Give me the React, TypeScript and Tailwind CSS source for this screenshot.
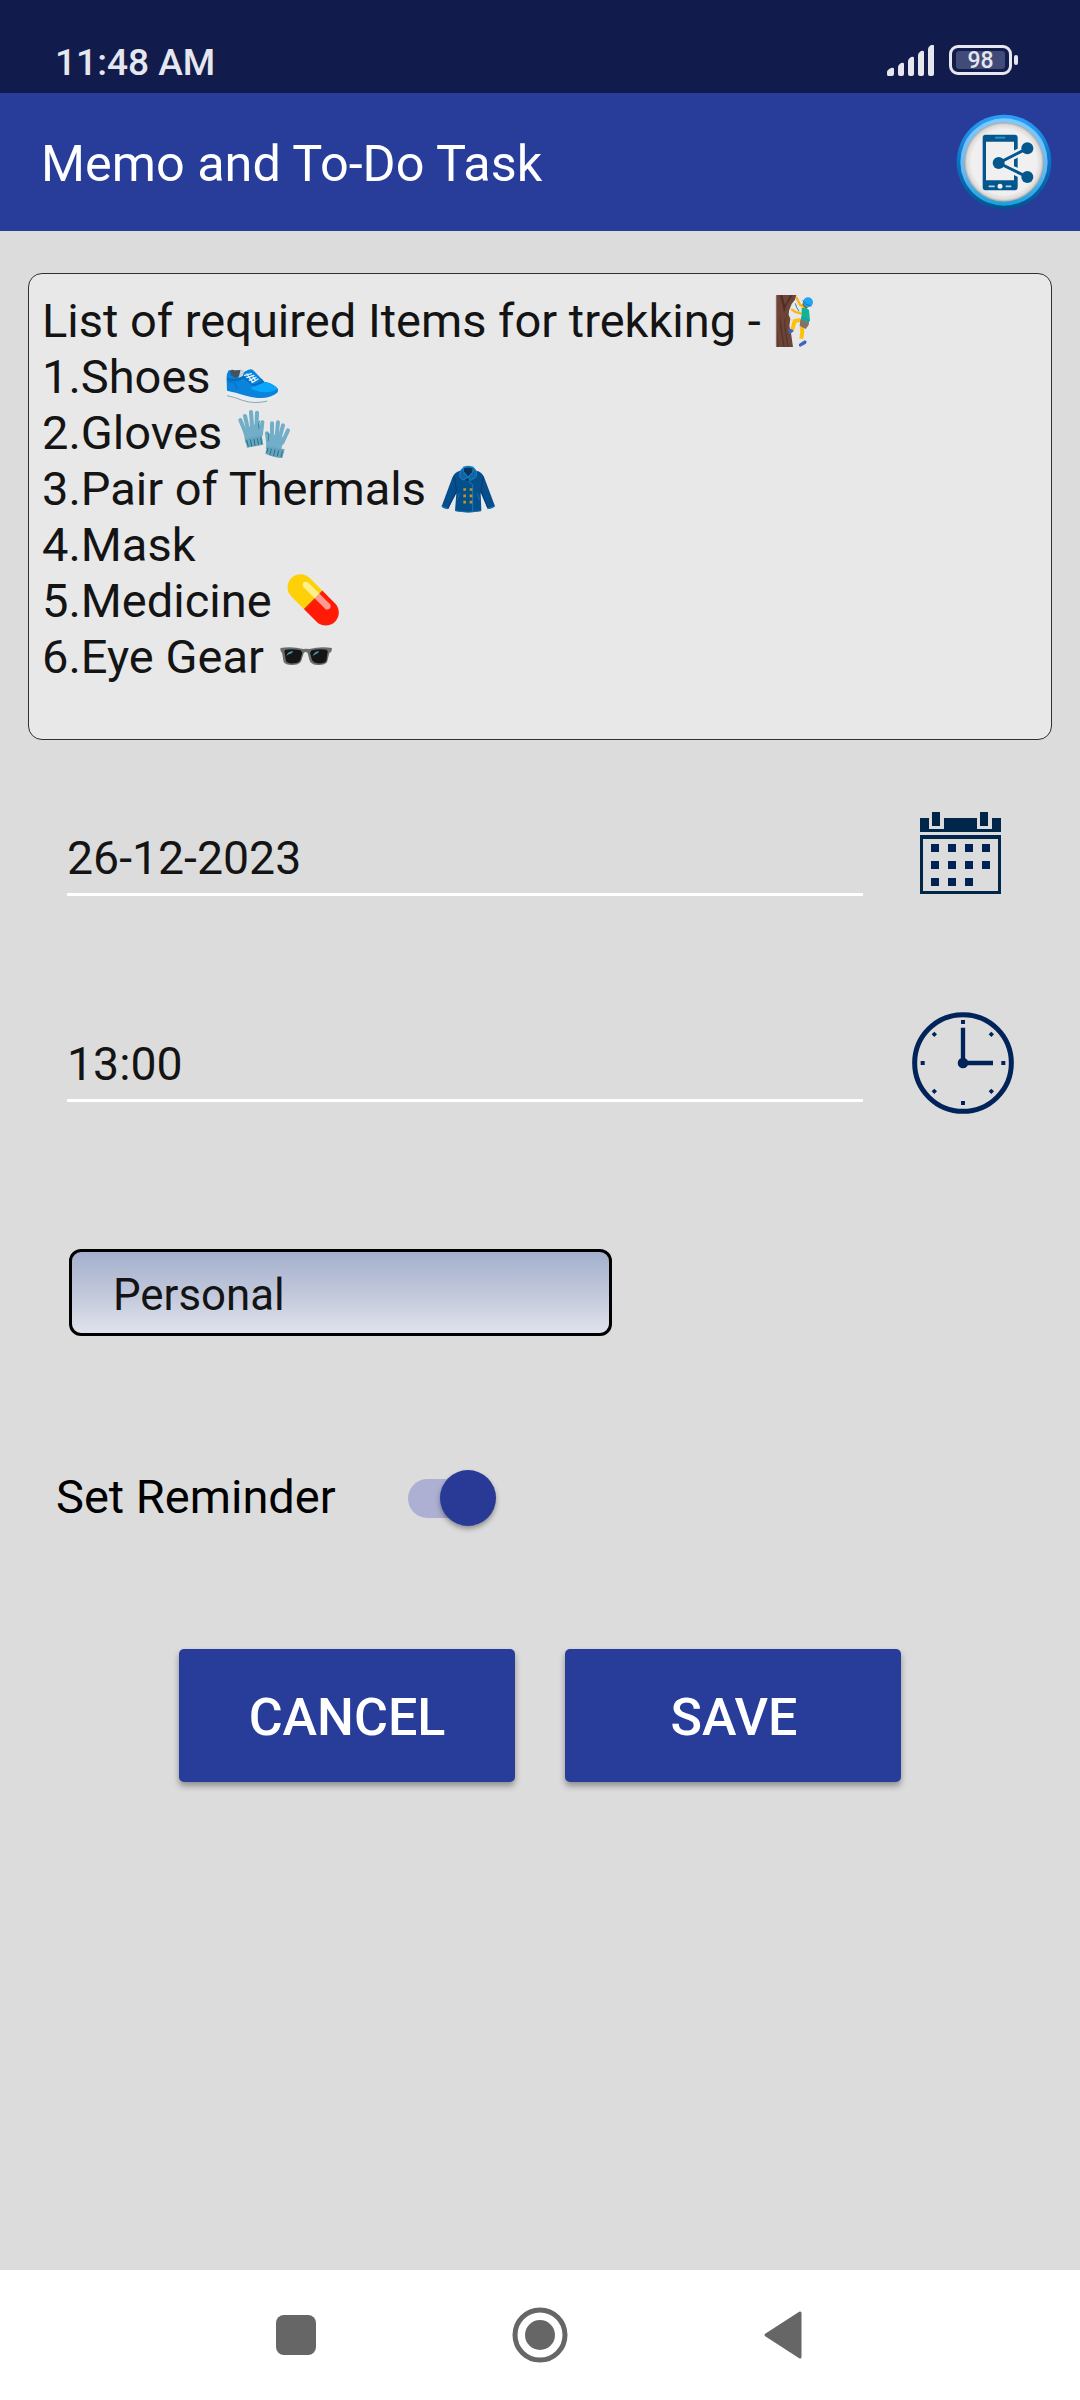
import React, { useState } from "react";
import clsx from "clsx";

const emojiClass = "ml-px h-14 w-[58px] shrink-0";

const ClimberEmoji = () => (
  <svg viewBox="99 69 174 168" className={emojiClass}>
    <path d="M109 75h60l-4 14-10 13-8 20-1 12 5 12-3 22 4 14 7 49h-50z" fill="#6d4437" />
    <path d="M119 76l10 36 3 18 8-26 18-28h-8l-15 30-8-30z" fill="#4e3029" />
    <path d="M120 130l5 40 9 60h-4l-10-60zM143 125l-8 28 3 30 8 47h-4l-8-50-2-26zM111 170l5 60h-4z" fill="#56352c" />
    <path d="M109 76v154" stroke="#8d6558" strokeWidth="2" />
    <path d="M170 84l10 20 10 6M156 119l10 7 18 5" stroke="#fbb416" strokeWidth="7" strokeLinejoin="round" strokeLinecap="round" fill="none" />
    <path d="M166 100q3 14 11 24" stroke="#2f82a5" strokeWidth="3" fill="none" />
    <path d="M188 96l18-2 3 14-11 9-13-4z" fill="#ffc107" />
    <path d="M190 96l5 10 9 5-6 4-11-10z" fill="#795025" />
    <circle cx="204" cy="97" r="15" fill="#22a5f1" />
    <path d="M188 91l8 11 18 6" stroke="#1675c7" strokeWidth="3" fill="none" />
    <path d="M185 115q12-7 22 5l3 32-7 8-22-4 4-20z" fill="#13b295" />
    <path d="M184 142l24 10" stroke="#149cb5" strokeWidth="5" />
    <path d="M182 150l-18 3-7 26M185 170l2 15-3 21" stroke="#fcc20b" strokeWidth="12" strokeLinejoin="round" fill="none" />
    <path d="M181 148l26 8-1 9-9 12-18-9z" fill="#82736a" />
    <path d="M145 174q6 4 14 5l2 5-12 9-4-8z" fill="#3e64bb" />
    <path d="M177 222l17-11 6 3-2 7-17 9-4-2z" fill="#3e64bb" />
  </svg>
);

const ShoeEmoji = () => (
  <svg viewBox="66 -3 174 168" className={emojiClass}>
    <path d="M77 120l2 20q18 4 44 13 33 8 59 4 33-3 49-22l-1-10z" fill="#e7eef1" />
    <path d="M78 137q22 4 46 14 38 12 75 2" stroke="#8aa5b2" strokeWidth="3" fill="none" />
    <path d="M83 61q-8 12-6 30l1 31q24 5 57 15 60 18 93-8 6-7 1-14-17-18-39-20l-35-36q-9-4-20 4-25 15-45-2z" fill="#0983dc" />
    <path d="M149 116q18-20 39-20 30 5 42 20-33 21-81 0z" fill="#08a7fb" />
    <path d="M88 63q4-6 12-2l21-1-4 16-14 8-14-9z" fill="#43525e" />
    <path d="M119 58q8 0 10 8l-4 13-12 4z" fill="#cad1d6" />
    <path d="M79 87q31 8 48-6l33 25 25-10-5-8" stroke="#066cb9" strokeWidth="6" fill="none" />
    <path d="M80 93l21 6 8 18" stroke="#0a75c7" strokeWidth="5" fill="none" />
    <path d="M131 76l20-5M137 83l22-7M145 91l20-9M153 98l18-11M138 72l17 25M153 77l9 12" stroke="#dff3ff" strokeWidth="4" strokeLinecap="round" />
  </svg>
);

const GlovesEmoji = () => (
  <svg viewBox="99 164 174 168" className={emojiClass}>
    <g stroke="#72aec7" strokeWidth="12" strokeLinecap="round" fill="#72aec7">
      <path d="M115 209l16 40M129 197l10 44M147 185l4 55M165 187l-2 53M181 216l-4 35" />
      <path d="M130 241l38-16 8 28-10 13-31 6z" />
      <path d="M210 219l0 43M228 216l-4 40M243 225l-10 38M258 240l-17 37M195 249l4 34" />
      <path d="M203 256l36 10-7 30-34-6z" />
    </g>
    <path d="M129 266l50-11 5 28-49 9z" fill="#68a4bd" />
    <path d="M195 288l53 9-7 26q-27-1-51-13z" fill="#68a4bd" />
    <path d="M134 269l5 20M145 267l4 22M156 266l3 20M166 264l4 19M176 261l3 20M198 293l-4 15M208 295l-4 18M219 297l-4 20M230 300l-4 18M241 302l-4 18" stroke="#23718b" strokeWidth="3" />
    <path d="M173 211q-7 8-2 24M194 247l6 4-1 22" stroke="#3787a3" strokeWidth="3" fill="none" />
  </svg>
);

const CoatEmoji = () => (
  <svg viewBox="717 331.5 174 168" className={emojiClass}>
    <path d="M780 361q-17 5-23 20l-32 86q4 8 19 8l25-46-4 52q38 9 79 0l-2-54 21 48q12 2 22-8l-32-85q-7-18-24-21z" fill="#064f8d" />
    <path d="M763 378l6 43-25 54M850 378l-7 42 20 52" stroke="#043c70" strokeWidth="3" fill="none" />
    <path d="M725 467l18 8M863 475l21-8" stroke="#1678bd" strokeWidth="3" />
    <path d="M790 352l14-4 16 4 8 12-13 26-13 2-16-16z" fill="#07375f" />
    <path d="M790 351q-14 11-10 29l9 9 16-9-15-17zM820 351q13 10 8 28l-18 12-5-12 13-14z" fill="#1264a2" stroke="#1c85ca" strokeWidth="3" />
    <path d="M790 351q14-5 30 0" stroke="#1c85ca" strokeWidth="5" fill="none" />
    <path d="M803 391l15 12v80" stroke="#167bb8" strokeWidth="3" fill="none" />
    <path d="M779 428l-7 20M831 428l8 20M767 481q39 8 76 0" stroke="#1670ad" strokeWidth="3" fill="none" />
    <path d="M790 413h8v8h-8zM809 413h8v8h-8zM790 432h8v8h-8zM809 432h8v8h-8zM790 451h8v8h-8zM809 451h8v8h-8z" fill="#bc9a16" />
  </svg>
);

const PillEmoji = () => (
  <svg viewBox="99 36 174 168" className={emojiClass}>
    <g transform="rotate(45 186.5 119.5)">
      <path d="M187 80.500H133a39 39 0 0 0 0 78H187z" fill="#fdd007" />
      <path d="M187 80.500H240a39 39 0 0 1 0 78H187z" fill="#ff1b05" />
      <path d="M187 80.500v78" stroke="#c73916" strokeWidth="2" />
      <path d="M187 93H137q-16 10 0 20h50z" fill="#ffef8c" />
      <path d="M187 93H233q15 10 0 20h-46z" fill="#ff9b91" />
    </g>
  </svg>
);

const GlassesEmoji = () => (
  <svg viewBox="78 204 174 168" className={emojiClass}>
    <path d="M88 264q35-6 69 3 9-2 18 0 34-9 68-3l-2 11-6 4-7 28q-8 10-34 7-12-1-18-12l-6-22q-6-8-12 0l-7 22q-5 11-20 12-25 3-33-8l-5-28-4-4z" fill="#6c6c6c" />
    <path d="M103 269q22-4 46 2l5 7-6 22q-5 10-19 10-19 2-24-7l-5-29zM182 271q24-6 45-2l3 5-4 29q-7 9-26 7-12-1-17-10l-6-22z" fill="#131516" />
    <path d="M106 287q5-13 20-14-2 9-11 9zM185 288q5-14 19-15-2 9-10 10z" fill="#508fa8" />
  </svg>
);

const noteLines = [
  { text: "List of required Items for trekking - ", Emoji: ClimberEmoji },
  { text: "1.Shoes ", Emoji: ShoeEmoji },
  { text: "2.Gloves ", Emoji: GlovesEmoji },
  { text: "3.Pair of Thermals ", Emoji: CoatEmoji },
  { text: "4.Mask" },
  { text: "5.Medicine ", Emoji: PillEmoji },
  { text: "6.Eye Gear ", Emoji: GlassesEmoji },
];

const StatusBar = () => (
  <div className="flex h-[93px] justify-between bg-[#111c4c] pl-[55px] pr-[62px] text-[#e5e6ee]">
    <span className="pt-[41px] text-[37.100px] leading-[44px] font-medium">11:48 AM</span>
    <div className="flex items-start pt-[45px]">
      <svg viewBox="0 0 48 31" className="mr-[14px] h-[31px] w-[48px]" fill="currentColor">
        <path d="M0 27q0-2 4-4 3-1 3 1v5q0 2-2 2H1q-1 0-1-2zM11 22q0-2 3-4 3-1 3 1v10q0 2-2 2h-2q-2 0-2-2zM21 16q0-2 3-4 3-1 3 1v16q0 2-2 2h-2q-2 0-2-2zM31 10q0-2 3-4 3-1 3 1v22q0 2-2 2h-2q-2 0-2-2zM41 4q0-2 3-4 3-1 3 1v28q0 2-2 2h-2q-2 0-2-2z" />
      </svg>
      <div className="flex h-[30px] w-[63px] items-center justify-center rounded-[9px] border-[3px] border-[#e5e6ee]">
        <div className="flex h-[18px] w-[49px] items-center justify-center rounded-[3px] bg-[#414b78] pt-[2px] text-[23px] leading-[18px] font-medium">
          98
        </div>
      </div>
      <div className="mt-[10px] ml-[2px] h-[10px] w-[4px] rounded-[2px] bg-[#e5e6ee]" />
    </div>
  </div>
);

const ShareIcon = () => (
  <svg viewBox="349 283 288 288" className="h-24 w-24">
    <defs>
      <linearGradient id="ring" x1="0" y1="0" x2="0" y2="1">
        <stop offset="0" stopColor="#2ba0fa" />
        <stop offset="0.5" stopColor="#0874c4" />
        <stop offset="1" stopColor="#03548e" />
      </linearGradient>
      <linearGradient id="innerRing" x1="0" y1="0" x2="0" y2="1">
        <stop offset="0" stopColor="#7fcaff" />
        <stop offset="0.6" stopColor="#67b8f2" />
        <stop offset="1" stopColor="#18a0dc" />
      </linearGradient>
      <radialGradient id="face">
        <stop offset="0.82" stopColor="#f0f0f1" />
        <stop offset="0.94" stopColor="#dedbd8" />
        <stop offset="1" stopColor="#a6a6a6" />
      </radialGradient>
    </defs>
    <circle cx="493" cy="427" r="142" fill="url(#ring)" />
    <circle cx="493" cy="427" r="131" fill="url(#innerRing)" />
    <circle cx="493" cy="427" r="119" fill="url(#face)" />
    <path
      fillRule="evenodd"
      d="M438 345h87q9 0 9 9v149q0 9-9 9h-87q-9 0-9-9V354q0-9 9-9zm1 21v116h84V366z"
      fill="#05568d"
    />
    <path d="M466 354h31" stroke="#2293c9" strokeWidth="6" />
    <path d="M447 500h18M498 500h17" stroke="#a9d9ee" strokeWidth="5" />
    <circle cx="481" cy="500" r="7.500" fill="#eef4f8" />
    <path d="M563 386l-86 44 86 42" stroke="#f0f0f1" strokeWidth="24" fill="none" />
    <path d="M563 386l-86 44 86 42" stroke="#05568d" strokeWidth="9" fill="none" />
    <path d="M528 419v21" stroke="#05568d" strokeWidth="8" />
    <circle cx="477" cy="430" r="18" fill="#05568d" />
    <circle cx="563" cy="386" r="18" fill="#05568d" />
    <circle cx="563" cy="472" r="18" fill="#05568d" />
  </svg>
);

const CalendarIcon = () => (
  <svg viewBox="240 96 243 246" className="h-[82px] w-[81px]" fill="#002356">
    <path d="M276 96h24v42h-24zM420 96h24v42h-24z" fill="#00234a" />
    <path d="M240 114h27v33h45v-33h99v33h45v-33h27v42H240z" fill="#002649" />
    <path fillRule="evenodd" d="M240 165h243v177H240zm9 12v156h225V177z" fill="#002649" />
    <path d="M273 192h24v24h-24zM324 192h24v24h-24zM375 192h24v24h-24zM426 192h24v24h-24zM273 243h24v24h-24zM324 243h24v24h-24zM375 243h24v24h-24zM426 243h24v24h-24zM273 294h24v24h-24zM324 294h24v24h-24zM375 294h24v24h-24z" />
  </svg>
);

const ClockIcon = () => (
  <svg viewBox="216 696 306 306" className="h-[102px] w-[102px]" fill="#00235a">
    <circle cx="369" cy="849" r="145" fill="none" stroke="#00235a" strokeWidth="15" />
    <path d="M369 743v106h90" fill="none" stroke="#00235a" strokeWidth="13" />
    <circle cx="369" cy="849" r="16" />
    <path d="M363 720h12v12h-12zM363 963h12v12h-12zM242 843h12v12h-12zM484 843h12v12h-12z" />
    <path d="M283 755l8 8-8 8-8-8zM454 755l8 8-8 8-8-8zM283 926l8 8-8 8-8-8zM454 926l8 8-8 8-8-8z" />
  </svg>
);

const NavigationBar = () => (
  <div className="flex h-[130px] items-center bg-white pl-[276px]">
    <div className="size-10 rounded-[8px] bg-[#666666]" />
    <svg viewBox="0 0 56 56" className="ml-[196px] size-14">
      <circle cx="28" cy="28" r="25" fill="none" stroke="#666666" strokeWidth="5" />
      <circle cx="28" cy="28" r="15" fill="#666666" />
    </svg>
    <svg viewBox="0 0 38 48" className="ml-[196px] h-[48px] w-[38px]">
      <path d="M2 24L36 2v44z" fill="#666666" stroke="#666666" strokeWidth="3" strokeLinejoin="round" />
    </svg>
  </div>
);

const App = () => {
  const [reminder, setReminder] = useState(true);

  return (
    <div className="flex h-[2400px] w-[1080px] flex-col overflow-hidden bg-[#dcdcdc] font-['Roboto',sans-serif] text-[#141414]">
      <StatusBar />
      <header className="flex h-[138px] items-start justify-between bg-[#283c99] pr-[28px] pl-[41px]">
        <h1 className="pt-[42px] text-[50.400px] leading-[58px] text-white">Memo and To-Do Task</h1>
        <button className="mt-[21px]">
          <ShareIcon />
        </button>
      </header>

      <main className="flex-1 pt-[42px]">
        <div className="mx-[28px] h-[467px] rounded-[14px] border border-[#303030] bg-[#e8e8e8] pt-[19px] pl-[13px]">
          {noteLines.map(({ text, Emoji }) => (
            <div key={text} className="flex h-[55.900px] text-[47px] leading-[55.900px] whitespace-pre">
              <span className="pt-[0.300px]">{text}</span>
              {Emoji && <Emoji />}
            </div>
          ))}
        </div>

        <div className="mt-[71px] flex h-[85px] pl-[67px]">
          <div className="w-[796px] border-b-[3px] border-white pt-[20px] text-[46.400px] leading-[55px]">26-12-2023</div>
          <button className="mt-px ml-[57px] h-[82px]">
            <CalendarIcon />
          </button>
        </div>

        <div className="mt-[116px] flex h-[102px] pl-[67px]">
          <div className="h-[90px] w-[796px] border-b-[3px] border-white pt-[25px] text-[46.400px] leading-[55px]">13:00</div>
          <button className="ml-[49px] h-[102px]">
            <ClockIcon />
          </button>
        </div>

        <div className="mt-[135px] ml-[69px] h-[87px] w-[543px] rounded-[12px] border-[3px] border-black bg-linear-to-b from-[#a4b0cd] via-[#c0c7da] to-[#e0e3eb] pt-[18px] pl-[41px] text-[43.800px] leading-[51px]">
          Personal
        </div>

        <div className="mt-[134px] flex h-[56px] pl-[56px]">
          <span className="w-[352px] text-[47px] leading-[53px] text-black">Set Reminder</span>
          <button onClick={() => setReminder(!reminder)} className="flex h-[56px] w-[88px] items-center">
            <span className="h-[39px] w-[75px] rounded-full bg-[#adb0d2]" />
            <span
              className={clsx(
                "size-14 rounded-full bg-[#283a96] shadow-[0_3px_5px_rgba(0,0,0,0.35)]",
                reminder ? "-ml-[43px]" : "-ml-[75px]"
              )}
            />
          </button>
        </div>

        <div className="mt-[123px] flex gap-[50px] pl-[179px] text-[52px] leading-[60px] font-medium text-white">
          <button className="h-[133px] w-[336px] rounded-[5px] bg-[#283c99] pt-[4px] shadow-[0_4px_6px_rgba(0,0,0,0.35)]">
            CANCEL
          </button>
          <button className="h-[133px] w-[336px] rounded-[5px] bg-[#283c99] pt-[4px] pl-[2px] shadow-[0_4px_6px_rgba(0,0,0,0.35)]">
            SAVE
          </button>
        </div>
      </main>
      <NavigationBar />
    </div>
  );
};

export default App;
